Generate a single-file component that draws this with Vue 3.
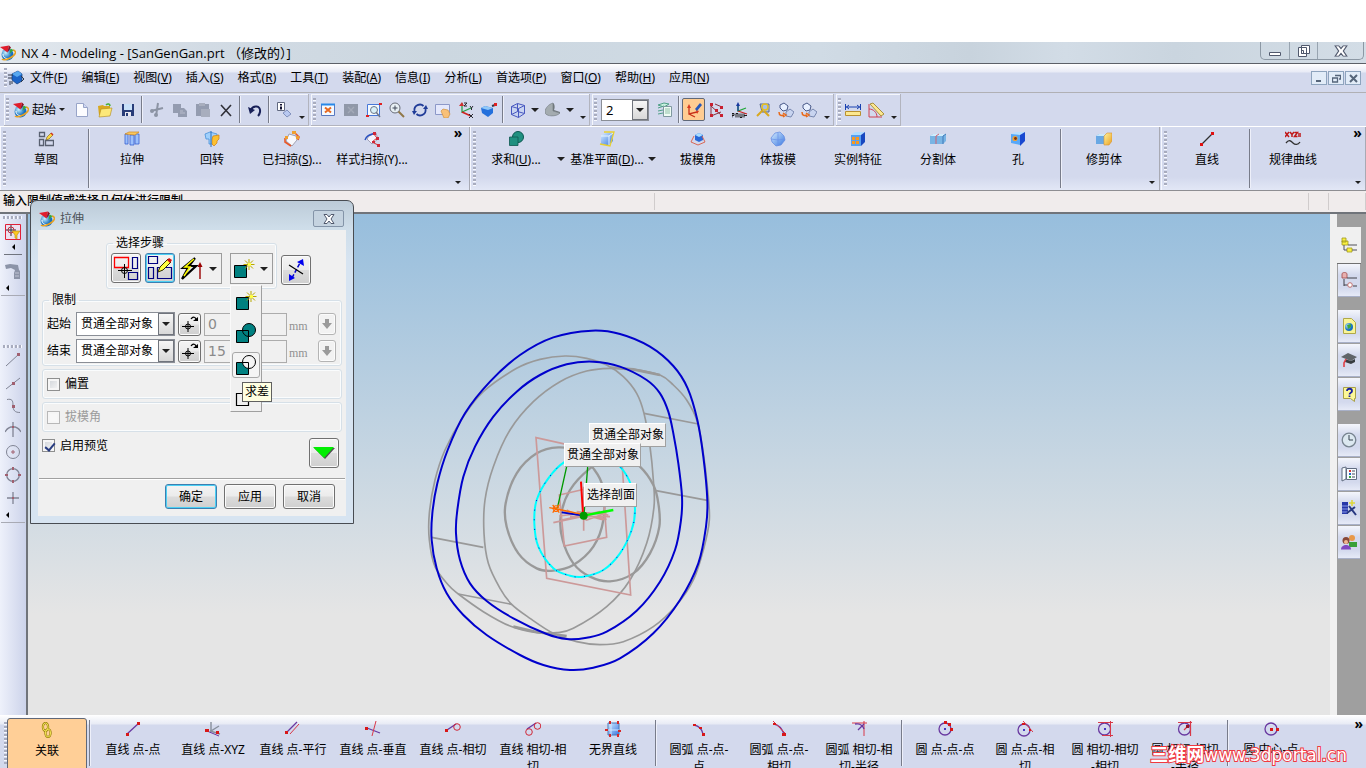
<template>
  <div class="app">
    <svg class="sprite" aria-hidden="true">
      <defs>
        <linearGradient id="gBlue" x1="0" y1="0" x2="1" y2="1">
          <stop offset="0" stop-color="#d4ecff" />
          <stop offset="1" stop-color="#3a78e0" />
        </linearGradient>
        <linearGradient id="gGold" x1="0" y1="0" x2="1" y2="1">
          <stop offset="0" stop-color="#fff3a0" />
          <stop offset="1" stop-color="#e8a020" />
        </linearGradient>
        <radialGradient id="gBall" cx="0.35" cy="0.35">
          <stop offset="0" stop-color="#c8f0ff" />
          <stop offset="1" stop-color="#1670c0" />
        </radialGradient>
      </defs>
      <symbol id="nx" viewBox="0 0 16 16">
        <circle cx="7.500" cy="9.500" r="6" fill="url(#gBall)" />
        <path d="M3 9c0 4 3 5 6 4.500" fill="none" stroke="#fff" />
        <path d="M13 5c4 1 3 5-3 8-4 2-7 2-8 1" fill="none" stroke="#e8a020" stroke-width="1.500" />
        <path d="M0 2l9-1.500-1.500 7z" fill="#e01c2c" />
        <path d="M9 .5l2 2-3.500 5z" fill="#8c1020" />
        <path d="M10.500 3.500l3 1.500-4 4z" fill="#38a838" />
      </symbol>
      <symbol id="part" viewBox="0 0 16 16">
        <path d="M4 4l6-3 4 3v7l-5 3-5-4z" fill="#1c64c8" stroke="#123c78" stroke-width=".7" />
        <path d="M4 4l5 3 5-3-4-3z" fill="#58a8f0" />
        <path d="M0 5h5M0 8h4M2 11v4M4 11v3M13 6l3 3-3 3" stroke="#303848" fill="none" />
      </symbol>
      <symbol id="new" viewBox="0 0 16 16">
        <path d="M2.500 1.500h7l4 4v9h-11z" fill="#fcfcff" stroke="#98a4c8" />
        <path d="M9.500 1.500v4h4" fill="#d0d8f4" stroke="#98a4c8" />
      </symbol>
      <symbol id="open" viewBox="0 0 16 16">
        <path d="M1 4l5-1 1 1h6v9H2z" fill="#d8a820" />
        <path d="M4 7l11-1-2 8-11 1z" fill="#fce878" stroke="#b08818" stroke-width=".6" />
        <path d="M9 3c2-2 4-1 4 1" stroke="#48b030" fill="none" stroke-width="1.500" />
      </symbol>
      <symbol id="save" viewBox="0 0 16 16">
        <path d="M2 2h12v12H2z" fill="#283c78" />
        <path d="M4 2h8v6H4z" fill="#c8e0f8" />
        <path d="M5 10h6v4H5z" fill="#e8e8f0" />
        <path d="M6 11h2v3H6z" fill="#283c78" />
      </symbol>
      <symbol id="cut" viewBox="0 0 16 16">
        <path d="M9 1L7 14M2 9l12-3" stroke="#8c94a4" stroke-width="2" fill="none" />
        <circle cx="7" cy="13" r="2" fill="#8c94a4" /><circle cx="3" cy="9" r="2" fill="#8c94a4" />
      </symbol>
      <symbol id="copy" viewBox="0 0 16 16">
        <path d="M1 2h8v9H1zM6 6h6l3 3v6H6z" fill="#949cb0" />
        <path d="M8 9h3M8 11h5" stroke="#b8bccc" />
      </symbol>
      <symbol id="paste" viewBox="0 0 16 16">
        <path d="M1 2h13v12H1z" fill="#949cb0" />
        <path d="M4 1h6v3H4zM6 7h9v8H6z" fill="#a8aebe" />
      </symbol>
      <symbol id="del" viewBox="0 0 16 16">
        <path d="M3 3l10 11M13 3L3 14" stroke="#303038" stroke-width="1.600" />
      </symbol>
      <symbol id="undo" viewBox="0 0 16 16">
        <path d="M4 8c2-5 10-5 9 2-.3 2-1 3-2 4" stroke="#182058" stroke-width="2" fill="none" />
        <path d="M1 5l2 7 5-4z" fill="#182058" />
      </symbol>
      <symbol id="info" viewBox="0 0 16 16">
        <path d="M1.500.5h7v8h-7z" fill="#fff" stroke="#606880" />
        <path d="M5 2v1.500M5 4.500v3" stroke="#101030" stroke-width="2" />
        <path d="M7 11l4-3 4 4-4 3z" fill="#b8c8f0" stroke="#7080b0" stroke-width=".8" />
      </symbol>
      <symbol id="fit" viewBox="0 0 16 16">
        <path d="M1.500 2.500h13v11h-13z" fill="#f4faff" stroke="#5878c0" />
        <path d="M1 2.500h14" stroke="#2888e8" stroke-width="2" />
        <path d="M5 5.500l6 5M11 5.500l-6 5" stroke="#e86820" stroke-width="2" />
      </symbol>
      <symbol id="fitgray" viewBox="0 0 16 16">
        <path d="M1 2h14v12H1z" fill="#9098a8" />
        <path d="M5 5l6 6M11 5l-6 6" stroke="#a4aab8" stroke-width="1.400" />
      </symbol>
      <symbol id="zoomwin" viewBox="0 0 16 16">
        <path d="M1.500 2.500h12v11h-12z" fill="#f4faff" stroke="#4878d8" />
        <circle cx="8" cy="8" r="3.500" fill="#d8f0f8" stroke="#707888" />
        <path d="M10 10l4 5" stroke="#707888" stroke-width="1.500" />
        <path d="M0 13h3v2H0zM13 1h3v2h-3z" fill="#e02020" />
      </symbol>
      <symbol id="zoom" viewBox="0 0 16 16">
        <circle cx="6" cy="6" r="5" fill="#e8f0f4" stroke="#686c78" />
        <path d="M3.500 6h5M6 3.500v5" stroke="#404858" />
        <path d="M9.500 9.500l5.500 5.500" stroke="#907848" stroke-width="2" />
      </symbol>
      <symbol id="rotate" viewBox="0 0 16 16">
        <path d="M2.500 9c-1-6 6-8 9-5M13.500 7c1 6-6 8-9 5" stroke="#203c98" stroke-width="1.800" fill="none" />
        <path d="M11 7h5l-2-4zM0 9l5 0-3 4z" fill="#203c98" />
      </symbol>
      <symbol id="pan" viewBox="0 0 16 16">
        <path d="M.5 2.500h14v10H.5z" fill="#e4e8fc" stroke="#8c98c8" />
        <path d="M6 9l2-2 5 1 2 4-2 4H9z" fill="#f8c078" stroke="#c88830" stroke-width=".6" />
      </symbol>
      <symbol id="csys" viewBox="0 0 16 16">
        <path d="M4 1v9l9-4" stroke="#28a048" stroke-width="1.300" fill="none" />
        <path d="M4 10l9 4" stroke="#d02020" stroke-width="1.500" />
        <path d="M1 4l3-4 2 4z" fill="#d03030" />
        <path d="M6 1h3L6 4h3M12 4l1.500 2L15 4M13.500 6v2M11 12l4 4M15 12l-4 4" stroke="#282830" fill="none" />
      </symbol>
      <symbol id="shaded" viewBox="0 0 16 16">
        <path d="M0 6l4-2 8 2v5l-5 4-6-4z" fill="#2470dc" />
        <path d="M0 6l4-2 8 2-5 2z" fill="#90c8f8" />
        <path d="M11 4l3-1" stroke="#303848" stroke-width="2" /><path d="M13 1h3v3h-3z" fill="#e02020" />
      </symbol>
      <symbol id="wire" viewBox="0 0 16 16">
        <path d="M1.500 4.500l6-3 7 2v8l-6 4-7-3zM1.500 4.500l7 2 6-3M8.500 6.500v9M7.500 1.500v8l-6 3M7.500 9.500l7 2" stroke="#4858c0" fill="#b8ccf8" fill-opacity=".4" />
      </symbol>
      <symbol id="section" viewBox="0 0 16 16">
        <path d="M8 1v8l7 2c-3 4-15 4-15-1 0-4 4-8 8-9z" fill="#a4acb0" stroke="#707880" stroke-width=".6" />
        <path d="M8 1c2 1 2 5 1 7l6 2v1l-7-2z" fill="#70787c" />
      </symbol>
      <symbol id="layers" viewBox="0 0 16 16">
        <path d="M1 3l6-2 5 1-5 3zM1 6l6-2M1 9l5-1M1 12l5-1" stroke="#50a088" fill="#c8f0e0" />
        <path d="M6.500 4.500h8v10h-8z" fill="#eefcf4" stroke="#8098a0" />
        <path d="M8 7h5M8 9h5M8 11h5" stroke="#90c0a8" />
      </symbol>
      <symbol id="wcs" viewBox="0 0 16 16">
        <path d="M3 4v8l8-2M3 12l6 3" stroke="#c83018" stroke-width="1.300" fill="none" />
        <path d="M1 6l2-4 2 4zM10 8l3 1-2 3z" fill="#d83820" />
        <path d="M9 7l5-6 2 2-5 6z" fill="#2858b8" />
      </symbol>
      <symbol id="wcs2" viewBox="0 0 16 16">
        <path d="M2 2v12l10-4M2 4l10 9M6 2l7 3" stroke="#883040" fill="none" />
        <path d="M1 1h3v3H1zM1 12h3v3H1zM11 4h3v3h-3zM11 12h3v3h-3zM6 7h3v3H6z" fill="#c82030" />
      </symbol>
      <symbol id="wcssave" viewBox="0 0 16 16">
        <path d="M6 2v7l8-3" stroke="#20a838" stroke-width="1.300" fill="none" />
        <path d="M6 9l9 3" stroke="#d02020" stroke-width="1.300" />
        <path d="M6 9V2" stroke="#1838a0" stroke-width="1.300" /><path d="M4 4l2-4 2 4z" fill="#1838a0" />
        <path d="M0 15.500v-4h2v2H0M4 15.500v-4h2v4M8 11.500v4h2v-4M12 11.500v4M12 13.500h3" stroke="#181818" fill="none" />
      </symbol>
      <symbol id="key" viewBox="0 0 16 16">
        <path d="M5 2h9v8H7z" fill="#a8c0e8" stroke="#586890" />
        <circle cx="10" cy="5" r="3" fill="none" stroke="#e8c020" stroke-width="1.500" />
        <path d="M8 8l-6 6M9 9l5 5" stroke="#d8a820" stroke-width="2" />
      </symbol>
      <symbol id="blocks" viewBox="0 0 16 16">
        <path d="M2 3l4-2 4 3-1 4-4 1-3-3z" fill="#e8f0ff" stroke="#485888" />
        <path d="M8 10l4-3 4 3-3 5-5-1z" fill="#c8d4f0" stroke="#7888b0" />
        <path d="M1 10c0 4 3 4 5 3M5 11l3 2-3 2" stroke="#e86818" stroke-width="1.500" fill="none" />
      </symbol>
      <symbol id="measure" viewBox="0 0 16 16">
        <path d="M.5 2v6M15.500 2v6M1 5h14M4 3L1.500 5 4 7M12 3l2.500 2L12 7" stroke="#1840b0" fill="none" />
        <path d="M.5 9.500h15v4H.5z" fill="#fce890" stroke="#b89030" />
      </symbol>
      <symbol id="angle" viewBox="0 0 16 16">
        <path d="M1 2v13h13M1 7c4 0 8 3 8 8" stroke="#d04050" fill="none" />
        <path d="M2 2l3-1 11 11-3 2z" fill="#fce890" stroke="#a89040" />
      </symbol>
      <symbol id="sketch" viewBox="0 0 16 16">
        <path d="M1.500 1.500h5v4h-5zM1.500 8.500h4v6h-4zM7.500 9.500h8v5h-8z" fill="none" stroke="#586070" stroke-width="1.300" />
        <path d="M8 9l1-3 4-4 2 2-4 4z" fill="#fcd840" stroke="#705820" stroke-width=".6" />
        <path d="M13 2l2 2" stroke="#d03020" stroke-width="1.500" />
      </symbol>
      <symbol id="extrude" viewBox="0 0 16 16">
        <path d="M1 3h3v10H1zM6 4h4v10H6zM11 3h4v10h-4z" fill="#9cc0fc" stroke="#3860d0" stroke-width=".8" />
        <path d="M1 3l4-2h10l-4 3z" fill="#f8c860" stroke="#d08820" stroke-width=".7" />
      </symbol>
      <symbol id="revolve" viewBox="0 0 16 16">
        <path d="M1 3l5-2 7 2v4H9v6H5V8H2z" fill="#a0d0fc" stroke="#4890d8" stroke-width=".8" />
        <path d="M9 5l6-1v4l-2 2v2l-3 3-2-2V8z" fill="#fcc030" stroke="#d08010" stroke-width=".7" />
        <path d="M7 0v16" stroke="#2870c0" />
      </symbol>
      <symbol id="swept" viewBox="0 0 16 16">
        <path d="M5 3l7 2 1 4-5 6-6-5z" fill="#f8f8fc" stroke="#a0a0b0" />
        <path d="M10 1l5 5-1 3M1 7v4l6 4" stroke="#e85828" stroke-width="1.600" fill="none" />
        <path d="M8 0h4v3H8zM1 5h3v3H1zM12 5h3v3h-3z" fill="#f0a030" />
      </symbol>
      <symbol id="styled" viewBox="0 0 16 16">
        <path d="M5 5l7-3 2 6-6 5-5-5z" fill="#f4f4fc" stroke="#a0a0b8" />
        <path d="M1 9c2-5 5-5 10-7" stroke="#2850c0" fill="none" stroke-width="1.400" />
        <path d="M9 2l4 5-5 4 6 3" stroke="#d03030" fill="none" />
        <path d="M9 1h3v3H9zM13 13h3v3h-3zM8 10h3v2H8zM12 6h3v3h-3z" fill="#d02838" />
      </symbol>
      <symbol id="unite" viewBox="0 0 16 16">
        <circle cx="10" cy="6" r="5.500" fill="#209080" stroke="#0c5850" />
        <path d="M1.500 6h8.500v8.500H1.500z" fill="#209080" stroke="#0c5850" stroke-width=".8" />
      </symbol>
      <symbol id="datum" viewBox="0 0 16 16">
        <path d="M2 5l4-3h8v8l-4 4H2z" fill="url(#gBlue)" />
        <path d="M2 5h8v9M10 5l4-3" stroke="#e8f4ff" fill="none" />
        <path d="M5 1h10l-4 14-10-2" fill="none" stroke="#e8d030" stroke-width="1.300" />
      </symbol>
      <symbol id="draft" viewBox="0 0 16 16">
        <path d="M5 4l4-2 4 2v5l-4 2-4-2z" fill="#2868d8" />
        <path d="M5 4l4 2 4-2-4-2z" fill="#a8dcff" />
        <path d="M4 5L1 11l7 3 7-3-3-6" stroke="#d86858" fill="none" />
      </symbol>
      <symbol id="bodydraft" viewBox="0 0 16 16">
        <path d="M5 2l5-1 4 4 1 4-4 5-5 1-4-4-1-4z" fill="url(#gBlue)" stroke="#6088e0" stroke-width=".7" />
        <path d="M1 8l7 1 7-1M8 2v13" stroke="#6890e8" stroke-width=".7" fill="none" />
      </symbol>
      <symbol id="instance" viewBox="0 0 16 16">
        <path d="M1 4h10v11H1z" fill="#58a0f0" /><path d="M1 4l4-3h10l-4 3z" fill="#b0dcff" />
        <path d="M11 4l4-3v10l-4 4z" fill="#1848c0" />
        <path d="M2 6h3v3H2zM6 6h3v3H6zM2 10h3v3H2zM6 10h3v3H6z" fill="#f89820" />
      </symbol>
      <symbol id="split" viewBox="0 0 16 16">
        <path d="M0 5l3-2h13v7l-3 3H0z" fill="#78b4e4" /><path d="M0 5l3-2h13l-3 2z" fill="#d0ecfc" />
        <path d="M13 5v8M13 5l3-2" stroke="#4078b8" /><path d="M6 13V5l3-2" stroke="#d06070" fill="none" />
      </symbol>
      <symbol id="hole" viewBox="0 0 16 16">
        <path d="M1 3h9v11l-9-2z" fill="#58a8f8" /><path d="M1 3l5-2h9l-5 3z" fill="#b8e0ff" />
        <path d="M10 4l5-3v9l-5 5z" fill="#1848d0" /><circle cx="5" cy="7.500" r="2.600" fill="#f0a030" /><circle cx="5.500" cy="7.500" r="1.400" fill="#783010" />
      </symbol>
      <symbol id="trim" viewBox="0 0 16 16">
        <path d="M0 5l3-2h7v10H0z" fill="#68a8e4" /><path d="M0 5l3-2h7L8 5z" fill="#c8e8fc" />
        <path d="M8 5l3-3h5v8l-3 4H8z" fill="url(#gGold)" stroke="#d89030" stroke-width=".6" />
      </symbol>
      <symbol id="line" viewBox="0 0 16 16">
        <path d="M3 13L14 2" stroke="#303030" stroke-width="1.300" />
        <path d="M1 12h3v3H1zM12 1h3v3h-3z" fill="#e01010" />
      </symbol>
      <symbol id="law" viewBox="0 0 16 16">
        <path d="M0 1l4 5M4 1L0 6M5 1l2 2.500L9 1M7 3v3M9.500 1.500h3L9.500 5.500h3M13 3h3M13 5h3" stroke="#c01818" stroke-width="1.500" fill="none" />
        <path d="M1 12c3-4 5-2 7 0s5 2 7-1" stroke="#303030" stroke-width="1.300" fill="none" />
      </symbol>
      <symbol id="linePP" viewBox="0 0 16 16">
        <path d="M2 13L14 2" stroke="#6838a0" stroke-width="1.300" /><path d="M1 12h3v3H1zM12 1h3v3h-3z" fill="#d81818" />
      </symbol>
      <symbol id="lineXYZ" viewBox="0 0 16 16">
        <path d="M6 1v9l8-5M5 10l10 3" stroke="#88909c" stroke-width="1.400" fill="none" />
        <path d="M2 10l12 5" stroke="#6838a0" /><path d="M0 8h4v3H0zM11 10h3v3h-3z" fill="#d81818" />
      </symbol>
      <symbol id="linePar" viewBox="0 0 16 16">
        <path d="M2 11L12 1" stroke="#6838a0" stroke-width="1.300" /><path d="M5 13l9-10" stroke="#d83848" /><path d="M0 10h3v3H0z" fill="#d81818" />
      </symbol>
      <symbol id="linePerp" viewBox="0 0 16 16">
        <path d="M2 7l13 5" stroke="#6838a0" stroke-width="1.300" /><path d="M11 0L7 15" stroke="#d83848" /><path d="M0 6h3v3H0z" fill="#d81818" />
      </symbol>
      <symbol id="lineTan" viewBox="0 0 16 16">
        <path d="M2 9l9-6" stroke="#6838a0" stroke-width="1.300" /><circle cx="12" cy="6" r="3.300" fill="none" stroke="#d02838" /><path d="M0 8h3v3H0z" fill="#d81818" />
      </symbol>
      <symbol id="lineTT" viewBox="0 0 16 16">
        <path d="M2 8l9-6" stroke="#6838a0" stroke-width="1.300" /><circle cx="4" cy="11" r="3.300" fill="none" stroke="#d02838" /><circle cx="12.500" cy="5" r="3.300" fill="none" stroke="#d02838" />
      </symbol>
      <symbol id="unbounded" viewBox="0 0 16 16">
        <path d="M3 2h11v12H3z" fill="url(#gBlue)" stroke="#4878b8" /><path d="M6 2v12M3 9h11" stroke="#d0e8ff" />
        <path d="M4 0h2v3H4zM12 0h2v3h-2zM0 8h3v2H0zM13 9h3v2h-3zM4 13h2v3H4zM12 13h2v3h-2z" fill="#d82828" />
      </symbol>
      <symbol id="arc3" viewBox="0 0 16 16">
        <path d="M3 4c5 1 8 4 9 9" stroke="#6838a0" stroke-width="1.300" fill="none" /><path d="M2 3h3v2H2zM8 6h3v2H8zM11 12h3v3h-3z" fill="#d81818" />
      </symbol>
      <symbol id="arcTan" viewBox="0 0 16 16">
        <path d="M3 3c5 1 8 5 10 10" stroke="#6838a0" stroke-width="1.300" fill="none" /><path d="M2 0l13 13" stroke="#d83848" /><path d="M2 2h3v2H2zM11 12h4v3h-4z" fill="#d81818" />
      </symbol>
      <symbol id="arcTT" viewBox="0 0 16 16">
        <path d="M1 2h15M13 0v15" stroke="#d83848" /><path d="M4 3c5-1 8 2 9 5M7 9l6-6" stroke="#6838a0" stroke-width="1.300" fill="none" />
      </symbol>
      <symbol id="circ3" viewBox="0 0 16 16">
        <circle cx="8" cy="8" r="6" fill="none" stroke="#6838a0" stroke-width="1.300" /><path d="M7 7h2v2H7z" fill="#4838c0" /><path d="M7 0h3v3H7zM11 2h3v3h-3zM13 7h3v3h-3z" fill="#d81818" />
      </symbol>
      <symbol id="circPPT" viewBox="0 0 16 16">
        <circle cx="7" cy="9" r="6" fill="none" stroke="#6838a0" stroke-width="1.300" /><path d="M6 0l10 11" stroke="#d83848" /><path d="M6 8h2v2H6z" fill="#4838c0" /><path d="M5 2h3v2H5zM12 8h2v2h-2z" fill="#d81818" />
      </symbol>
      <symbol id="circTTT" viewBox="0 0 16 16">
        <circle cx="7.500" cy="8" r="6" fill="none" stroke="#6838a0" stroke-width="1.300" /><path d="M1 1.500h15M13.500 0v16M5 14.500h11" stroke="#d83848" /><path d="M7 7h2v2H7z" fill="#4838c0" />
      </symbol>
      <symbol id="circTTR" viewBox="0 0 16 16">
        <circle cx="7.500" cy="8" r="6" fill="none" stroke="#6838a0" stroke-width="1.300" /><path d="M1 1.500h14M13.500 0v15M7 9l5-5" stroke="#d83848" stroke-width="1.200" /><path d="M9 4h3v3H9z" fill="#981828" />
      </symbol>
      <symbol id="circCP" viewBox="0 0 16 16">
        <circle cx="8" cy="8" r="6" fill="none" stroke="#6838a0" stroke-width="1.300" /><path d="M7 7h3v3H7zM13 7h3v3h-3z" fill="#d81818" />
      </symbol>
      <symbol id="chain" viewBox="0 0 16 16">
        <ellipse cx="6.500" cy="5" rx="2.600" ry="4" fill="none" stroke="#988010" stroke-width="2.200" /><ellipse cx="9" cy="11" rx="2.600" ry="4" fill="none" stroke="#988010" stroke-width="2.200" />
        <ellipse cx="6.500" cy="5" rx="2.600" ry="4" fill="none" stroke="#f0e050" /><ellipse cx="9" cy="11" rx="2.600" ry="4" fill="none" stroke="#f0e050" />
      </symbol>
      <symbol id="filter" viewBox="0 0 16 16">
        <path d="M.5.5h15v15H.5z" fill="#ece0f0" stroke="#e02038" /><path d="M6 1v11M1 6h10" stroke="#303040" /><circle cx="6" cy="6" r="3" fill="none" stroke="#c03040" />
        <path d="M7 7h8l-3 4v4l-2-1v-3z" fill="#fcc820" stroke="#b08818" stroke-width=".6" />
      </symbol>
      <symbol id="spray" viewBox="0 0 16 16">
        <path d="M0 2l5-1 8 1 1 5 1 1v8H9v-6l1-3-4-2-5 1z" fill="#8c94a8" /><path d="M10 10h4M10 13h4" stroke="#c0c4d4" />
      </symbol>
      <symbol id="snapEnd" viewBox="0 0 16 16"><path d="M1 14L14 2" stroke="#808494" /><path d="M12 1h3v3h-3z" fill="#a06070" /></symbol>
      <symbol id="snapMid" viewBox="0 0 16 16"><path d="M1 14L15 3" stroke="#808494" /><path d="M7 7h3v3H7z" fill="#a06070" /></symbol>
      <symbol id="snapCurve" viewBox="0 0 16 16"><path d="M2 1.500c5-1 6 1 6 6s2 7 7 7" stroke="#808494" fill="none" /><path d="M7 7h3v3H7z" fill="#a06070" /></symbol>
      <symbol id="snapInt" viewBox="0 0 16 16"><path d="M0 11c4-7 12-7 16 0M8 1v15" stroke="#808494" fill="none" stroke-width="1.300" /><path d="M7 5h2v2H7z" fill="#a06070" /></symbol>
      <symbol id="snapCen" viewBox="0 0 16 16"><circle cx="8" cy="8" r="6.500" fill="none" stroke="#808494" /><path d="M8 6v4M6 8h4" stroke="#a06070" /></symbol>
      <symbol id="snapQuad" viewBox="0 0 16 16"><circle cx="8" cy="8" r="6.300" fill="none" stroke="#808494" stroke-width="1.300" /><path d="M7 0h2v3H7zM7 13h2v3H7zM0 7h3v2H0zM13 7h3v2h-3z" fill="#a06070" /></symbol>
      <symbol id="snapPt" viewBox="0 0 16 16"><path d="M8 2v12M2 8h12" stroke="#808494" stroke-width="1.300" /><path d="M7 7h2v2H7z" fill="#a06070" /></symbol>
      <symbol id="assy" viewBox="0 0 16 16">
        <path d="M1 1h4v4H1zM1 4h6v4H1zM6 11h5v4H6z" fill="#f8f040" stroke="#a09820" stroke-width=".8" /><path d="M3 8v5M3 13h3M7 8h9M11 13h5" stroke="#505058" fill="none" />
      </symbol>
      <symbol id="nav" viewBox="0 0 16 16">
        <path d="M1 2c0-2 5-2 5 0v4H1z" fill="#e8b0b0" stroke="#a04848" stroke-width=".8" /><path d="M3 7v7M3 13h4M6 6h10M12 14h4" stroke="#404048" fill="none" /><circle cx="9" cy="13" r="2.300" fill="#fff" stroke="#c07070" />
      </symbol>
      <symbol id="web" viewBox="0 0 16 16">
        <path d="M2.500.5h8l4 4v11h-12z" fill="#f8f498" stroke="#b0a848" /><circle cx="8" cy="9" r="4" fill="url(#gBall)" /><path d="M6 7l4-1v3l-3 2z" fill="#40a838" />
      </symbol>
      <symbol id="cap" viewBox="0 0 16 16">
        <path d="M0 5l7-4 9 4-6 4z" fill="#606468" /><path d="M4 7l6 2 4-2v3l-4 2-6-2z" fill="#383c40" /><path d="M5 7l-2 4v4" stroke="#e04048" stroke-width="1.600" fill="none" />
      </symbol>
      <symbol id="help" viewBox="0 0 16 16">
        <path d="M2.500 1.500h12v11h-1v3l-4-3h-7z" fill="#fcf898" stroke="#a8a048" /><path d="M6 5c0-3 5-3 5 0 0 2-2.500 1.500-2.500 3.500M8.500 9.500v1.500" stroke="#1820a0" stroke-width="1.800" fill="none" />
      </symbol>
      <symbol id="clock" viewBox="0 0 16 16">
        <circle cx="8" cy="8" r="6.800" fill="#dce8f0" stroke="#788490" stroke-width="1.300" /><path d="M8 3v5h4" stroke="#384450" fill="none" />
      </symbol>
      <symbol id="role" viewBox="0 0 16 16">
        <path d="M1 2l4-1v12l-4 2zM5.500 2.500h10v11h-10z" fill="#f8fcff" stroke="#606c80" /><path d="M8 4h2v2H8z" fill="#d83030" /><path d="M8 7h2v2H8z" fill="#2868c8" /><path d="M8 10h2v2H8z" fill="#38a838" /><path d="M11 5h3M11 8h3M11 11h3" stroke="#404858" />
      </symbol>
      <symbol id="vis" viewBox="0 0 16 16">
        <path d="M1 2h6v12H1z" fill="#2838a8" /><path d="M1 6h6M1 9h6M1 12h6" stroke="#8898e8" /><path d="M8 6l7 9M14 7l-8 6" stroke="#283880" stroke-width="2" /><path d="M11 0v6M8 3h6" stroke="#e0d838" stroke-width="1.500" />
      </symbol>
      <symbol id="users" viewBox="0 0 16 16">
        <circle cx="11" cy="4" r="3" fill="#e89848" /><path d="M8 8h8v5H8z" fill="#38a038" /><circle cx="5" cy="6.500" r="3.500" fill="#884838" /><circle cx="5" cy="8" r="2" fill="#f0b890" /><path d="M0 15.500c0-6 10-6 10 0z" fill="#8048c0" />
      </symbol>
      <symbol id="stepSection" viewBox="0 0 26 26">
        <path d="M1.500 2.500h14v10h-14z" fill="none" stroke="#f00" stroke-width="1.300" /><path d="M19.500 2.500h5v11h-5zM15.500 17.500h9v7h-9z" fill="none" stroke="#000080" stroke-width="1.200" /><path d="M11.500 9v14M5 15.500h14" stroke="#000" /><circle cx="11.500" cy="15.500" r="3" fill="none" stroke="#000" />
      </symbol>
      <symbol id="stepSketch" viewBox="0 0 26 26">
        <path d="M1.500 1.500h9v7h-9zM1.500 12.500h5v11h-5zM10.500 12.500h14v11h-14z" fill="none" stroke="#000080" stroke-width="1.200" /><path d="M11 17l2-5 8-8 3 3-8 8z" fill="#ffff40" stroke="#303000" /><path d="M20 5l2-2 3 2-2 3z" fill="#d01010" />
      </symbol>
      <symbol id="stepDir" viewBox="0 0 26 26">
        <path d="M15 2L3 12h5l-6 11M15 2l-6 8h7L2 23" fill="none" stroke="#000" stroke-width="2.200" /><path d="M14 3L5 11h5L4 20" fill="none" stroke="#ff0" stroke-width="1.500" /><path d="M20 8v15" stroke="#900" stroke-width="1.400" /><path d="M17.500 11l2.500-5 2.500 5z" fill="#900" />
      </symbol>
      <symbol id="boolNew" viewBox="0 0 22 20">
        <path d="M1.500 6.500h12v12h-12z" fill="#008080" stroke="#000" /><path d="M16 0v11M10.500 5.500h11M12 1.500l8 8M20 1.500l-8 8" stroke="#b8a800" /><path d="M15 4h3v3h-3z" fill="#ff4" />
      </symbol>
      <symbol id="boolAdd" viewBox="0 0 22 20">
        <path d="M1.500 7.500h12v12h-12z" fill="#008080" stroke="#000" /><circle cx="14" cy="7" r="6.500" fill="#008080" stroke="#000" /><path d="M7.500 7.500h6v6" fill="none" stroke="#000" />
      </symbol>
      <symbol id="boolSub" viewBox="0 0 22 20">
        <path d="M1.500 7.500h12v12h-12z" fill="#008080" stroke="#000" /><circle cx="14" cy="7" r="6.500" fill="#f4f4f4" stroke="#000" /><path d="M7.500 7.500h6v6" fill="none" stroke="#000" />
      </symbol>
      <symbol id="boolInt" viewBox="0 0 22 20">
        <path d="M1.500 6.500h12v12h-12z" fill="none" stroke="#000" stroke-width="1.200" />
      </symbol>
      <symbol id="flip" viewBox="0 0 26 26">
        <path d="M9 21l9-17" stroke="#00c" stroke-width="1.500" stroke-dasharray="4 2" /><path d="M14 5l6-3 1 7zM6 17l0 7 6-3z" fill="#00e" /><path d="M6 8l14 9" stroke="#000" stroke-width="1.200" />
      </symbol>
      <symbol id="pointIn" viewBox="0 0 16 16">
        <path d="M6 5v11M0 10.500h12" stroke="#000" /><circle cx="6" cy="10.500" r="2.500" fill="none" stroke="#000" /><path d="M9 3c2-3 5-2 5 1" stroke="#000" fill="none" stroke-width="1.200" /><path d="M11 5h5V1z" />
      </symbol>
      <symbol id="down" viewBox="0 0 12 12"><path d="M4 1h4v4h3l-5 6-5-6h3z" fill="#9a9a9a" /></symbol>
      <symbol id="closeX" viewBox="0 0 12 10">
        <path d="M1 .5h3l2 2.500 2-2.500h3L8 5l3 4.500H8L6 7 4 9.500H1L4 5z" fill="#fff" stroke="#50586c" />
      </symbol>
    </svg>

    <header class="titlebar">
      <svg class="icon"><use href="#nx" /></svg>
      <h1 class="title">NX 4 - Modeling - [SanGenGan.prt （修改的）]</h1>
      <div class="win-buttons">
        <button class="win-btn" aria-label="Minimize"><svg viewBox="0 0 14 12"><path d="M1.500 7.500h11v3h-11z" fill="#fff" stroke="#50586c" /></svg></button>
        <button class="win-btn" aria-label="Restore"><svg viewBox="0 0 14 12"><path d="M4.500.5h8v8h-8zM1.500 2.500h8v9h-8zM4.500 5.500h2v3h-2z" fill="#fff" stroke="#50586c" /></svg></button>
        <button class="win-btn wide" aria-label="Close"><svg viewBox="0 0 12 10"><use href="#closeX" /></svg></button>
      </div>
    </header>

    <nav class="menubar">
      <i class="grip"></i>
      <svg class="icon"><use href="#part" /></svg>
      <div class="menus">
        <button v-for="m in menus" :key="m.key" class="menu">{{ m.text }}(<u>{{ m.key }}</u>)</button>
      </div>
      <div class="mdi">
        <button aria-label="Minimize window"><svg viewBox="0 0 9 9"><path d="M1 7h5" stroke="#56657a" stroke-width="2" /></svg></button>
        <button aria-label="Restore window"><svg viewBox="0 0 9 9"><path d="M3 1.500h5.500V5H7M.5 4h5v4h-5z" fill="none" stroke="#56657a" stroke-width="1.300" /></svg></button>
        <button aria-label="Close window"><svg viewBox="0 0 9 9"><path d="M1 1l7 7M8 1L1 8" stroke="#56657a" stroke-width="2" /></svg></button>
      </div>
    </nav>

    <div class="toolrow">
      <div v-for="(bar, b) in bars" :key="b" class="bar">
        <i class="grip"></i>
        <template v-for="(t, i) in bar" :key="i">
          <button v-if="t === 'start'" class="start"><svg class="icon"><use href="#nx" /></svg>起始<i class="tri small"></i></button>
          <span v-else-if="t === '|'" class="sep"></span>
          <button v-else-if="t === 'v'" class="drop" aria-label="More"><i class="tri"></i></button>
          <span v-else-if="t === 'layer'" class="combo layer">
            <select v-model="layer" aria-label="Layer"><option>1</option><option>2</option></select>
            <i class="combo-arrow"><i class="tri"></i></i>
          </span>
          <button v-else class="tool" :class="{ active: t === 'wcs' }" :aria-label="t"><svg class="icon"><use :href="'#' + t" /></svg></button>
        </template>
        <button class="mini" aria-label="Toolbar options"><i class="tri small"></i></button>
      </div>
    </div>

    <div class="featurerow">
      <div v-for="(bar, b) in features" :key="b" class="fbar" :class="{ grow: bar.grow }">
        <i class="grip"></i>
        <template v-for="(f, i) in bar.items" :key="i">
          <span v-if="f === '|'" class="sep"></span>
          <template v-else>
            <button class="feature">
              <svg class="icon"><use :href="'#' + f.icon" /></svg>
              <span>{{ f.text }}<template v-if="f.key">(<u v-if="f.line">{{ f.key }}</u><template v-else>{{ f.key }}</template>)...</template></span>
            </button>
            <button v-if="f.drop" class="fdrop" aria-label="More"><i class="tri"></i></button>
          </template>
        </template>
        <div class="fend">
          <b v-if="bar.more" class="chev">»</b>
          <i class="tri small"></i>
        </div>
      </div>
    </div>

    <div class="status">
      <span class="cue">输入限制值或选择几何体进行限制</span>
      <span class="cell"></span>
      <span class="cell narrow"></span>
      <span class="cell last"></span>
    </div>

    <main class="workspace">
      <aside class="rail">
        <div class="railbar">
          <i class="hgrip"></i>
          <button class="railbtn first" aria-label="Filter"><svg class="icon"><use href="#filter" /></svg></button>
          <i class="left"></i>
          <hr />
          <button class="railbtn" aria-label="Color"><svg class="icon"><use href="#spray" /></svg></button>
          <i class="left side"></i>
        </div>
        <div class="railbar">
          <i class="hgrip"></i>
          <button v-for="s in snaps" :key="s" class="railbtn" :aria-label="s"><svg class="icon"><use :href="'#' + s" /></svg></button>
          <i class="left side"></i>
        </div>
      </aside>

      <section class="stage">
        <div class="model">
          <svg viewBox="0 0 900 1080">
            <g fill="none" stroke="#999" stroke-width="5">
              <path v-for="(p, i) in grayCurves" :key="i" :d="smooth(p)" />
              <path d="M672 280L835 312M708 512L862 541M35 652L190 682M115 822L275 853" />
              <path d="M570 143L640 148L720 165M280 920L350 936L440 948" stroke-width="8" />
            </g>
            <g fill="none" stroke="#999" stroke-width="7">
              <path v-for="(p, i) in holes" :key="i" :d="smooth(p)" />
            </g>
            <g fill="none" stroke="#c99" stroke-width="5">
              <path d="M348 353L380 775L632 825L605 410Z" />
              <path d="M418 525L548 495L560 652L433 678Z" />
              <path d="M491 500V632M400 608L570 572M430 575L560 598M425 600L540 575M450 590H570M440 570L500 600L560 578M418 588L480 580L550 600M470 575L565 585" />
            </g>
            <g fill="none" stroke="#00c" stroke-width="6">
              <path v-for="(p, i) in blueCurves" :key="i" :d="smooth(p)" />
            </g>
            <path :d="smooth(cyan)" fill="none" stroke="#0ff" stroke-width="6" />
            <path :d="smooth(cyan)" fill="none" stroke="#00c" stroke-width="3" stroke-dasharray="3 26" />
            <path d="M440 440L412 565M503 440L492 585M509 340V370" stroke="#090" stroke-width="4" />
            <path d="M490 587L425 577" stroke="#00c" stroke-width="5" />
            <path d="M425 570L488 583M388 563L440 573M398 555L418 578M418 554L398 578" stroke="#ff6a00" stroke-width="4" />
            <circle cx="408" cy="566" r="9" fill="none" stroke="#ff6a00" stroke-width="3" />
            <path d="M483 485L489 582" stroke="#f00" stroke-width="6" />
            <path d="M490 587L580 570" stroke="#0f0" stroke-width="7" />
            <circle cx="491" cy="587" r="12" fill="#090" />
          </svg>
          <span class="tag end">贯通全部对象</span>
          <span class="tag begin">贯通全部对象</span>
          <span class="tag profile">选择剖面</span>
        </div>
      </section>

      <aside class="resource">
        <button v-for="r in resources" :key="r.icon" class="rtab" :class="{ current: r.current, gap: r.gap }" :aria-label="r.icon">
          <svg class="icon"><use :href="'#' + r.icon" /></svg>
        </button>
      </aside>
    </main>

    <footer class="curvebar">
      <i class="grip"></i>
      <template v-for="(c, i) in curves" :key="i">
        <span v-if="c === '|'" class="sep"></span>
        <button v-else class="curve" :class="{ pressed: c.pressed }">
          <svg class="icon"><use :href="'#' + c.icon" /></svg>
          <span>{{ c.text }}</span>
        </button>
      </template>
      <b class="chev">»</b>
      <span class="watermark"><b>三维网</b>www.3dportal.cn</span>
    </footer>

    <form class="dialog" @submit.prevent>
      <div class="dialog-head">
        <svg class="icon"><use href="#nx" /></svg>
        <h2>拉伸</h2>
        <button type="button" class="dialog-close" aria-label="Close"><svg viewBox="0 0 12 10"><use href="#closeX" /></svg></button>
      </div>
      <div class="dialog-body">
        <div class="steps">
          <fieldset class="group steps-group">
            <legend>选择步骤</legend>
            <button type="button" class="btn big" aria-label="选择剖面"><svg><use href="#stepSection" /></svg></button>
            <button type="button" class="btn big focus" aria-label="草图剖面"><svg><use href="#stepSketch" /></svg></button>
            <button type="button" class="split" aria-label="方向"><svg><use href="#stepDir" /></svg><i class="tri"></i></button>
            <div class="bool">
              <button type="button" class="split" aria-label="布尔"><svg class="op"><use href="#boolNew" /></svg><i class="tri"></i></button>
              <div class="bool-menu">
                <button v-for="o in ops" :key="o.icon" type="button" :class="{ hot: o.hot }" :aria-label="o.text">
                  <svg class="op"><use :href="'#' + o.icon" /></svg>
                </button>
                <span class="tip">求差</span>
              </div>
            </div>
          </fieldset>
          <button type="button" class="btn big flip" aria-label="反向"><svg><use href="#flip" /></svg></button>
        </div>

        <fieldset class="group limits">
          <legend>限制</legend>
          <div v-for="l in limits" :key="l.id" class="limit">
            <label :for="l.id">{{ l.text }}</label>
            <span class="combo wide">
              <select :id="l.id"><option>贯通全部对象</option><option>值</option></select>
              <i class="combo-arrow"><i class="tri"></i></i>
            </span>
            <button type="button" class="btn point" aria-label="点"><svg class="icon"><use href="#pointIn" /></svg></button>
            <input :value="l.value" :aria-label="l.text + '值'" disabled />
            <span class="unit">mm</span>
            <button type="button" class="btn arrow" aria-label="选项" disabled><svg><use href="#down" /></svg></button>
          </div>
        </fieldset>

        <div class="group check"><input id="offset" type="checkbox" /><label for="offset">偏置</label></div>
        <div class="group check off"><input id="taper" type="checkbox" disabled /><label for="taper">拔模角</label></div>

        <div class="preview">
          <input id="preview" v-model="preview" type="checkbox" />
          <label for="preview">启用预览</label>
          <button type="button" class="btn big more" aria-label="更多">
            <svg viewBox="0 0 26 26"><path d="M3 8h21L14 19z" fill="#505050" /><path d="M2 7h21L13 18z" fill="#0e0" /></svg>
          </button>
        </div>
        <hr class="rule" />
        <div class="actions">
          <button type="submit" class="btn text focus">确定</button>
          <button type="button" class="btn text">应用</button>
          <button type="button" class="btn text">取消</button>
        </div>
      </div>
    </form>
  </div>
</template>

<script setup>
import { ref } from 'vue'

const layer = ref('2')
const preview = ref(true)

const menus = [
  { text: '文件', key: 'F' },
  { text: '编辑', key: 'E' },
  { text: '视图', key: 'V' },
  { text: '插入', key: 'S' },
  { text: '格式', key: 'R' },
  { text: '工具', key: 'T' },
  { text: '装配', key: 'A' },
  { text: '信息', key: 'I' },
  { text: '分析', key: 'L' },
  { text: '首选项', key: 'P' },
  { text: '窗口', key: 'O' },
  { text: '帮助', key: 'H' },
  { text: '应用', key: 'N' }
]

// '|' is a separator, 'v' a drop-down arrow
const bars = [
  ['start', 'new', 'open', 'save', '|', 'cut', 'copy', 'paste', 'del', '|', 'undo', '|', 'info'],
  ['fit', 'fitgray', 'zoomwin', 'zoom', 'rotate', 'pan', 'csys', 'shaded', '|', 'wire', 'v', 'section', 'v'],
  ['layer', 'layers', '|', 'wcs', 'wcs2', 'wcssave', 'key', 'blocks', 'blocks'],
  ['measure', 'angle']
]

const features = [
  {
    more: true,
    items: [
      { icon: 'sketch', text: '草图' },
      '|',
      { icon: 'extrude', text: '拉伸' },
      { icon: 'revolve', text: '回转' },
      { icon: 'swept', text: '已扫掠', key: 'S', line: true },
      { icon: 'styled', text: '样式扫掠', key: 'Y' }
    ]
  },
  {
    items: [
      { icon: 'unite', text: '求和', key: 'U', line: true, drop: true },
      { icon: 'datum', text: '基准平面', key: 'D', line: true, drop: true },
      { icon: 'draft', text: '拔模角' },
      { icon: 'bodydraft', text: '体拔模' },
      { icon: 'instance', text: '实例特征' },
      { icon: 'split', text: '分割体' },
      { icon: 'hole', text: '孔' },
      '|',
      { icon: 'trim', text: '修剪体' }
    ]
  },
  {
    more: true,
    grow: true,
    items: [{ icon: 'line', text: '直线' }, '|', { icon: 'law', text: '规律曲线' }]
  }
]

const snaps = ['snapEnd', 'snapMid', 'snapCurve', 'snapInt', 'snapCen', 'snapQuad', 'snapPt']

const resources = [
  { icon: 'assy', current: true },
  { icon: 'nav' },
  { icon: 'web', gap: true },
  { icon: 'cap' },
  { icon: 'help' },
  { icon: 'clock', gap: true },
  { icon: 'role' },
  { icon: 'vis' },
  { icon: 'users' }
]

const curves = [
  { icon: 'chain', text: '关联', pressed: true },
  '|',
  { icon: 'linePP', text: '直线 点-点' },
  { icon: 'lineXYZ', text: '直线 点-XYZ' },
  { icon: 'linePar', text: '直线 点-平行' },
  { icon: 'linePerp', text: '直线 点-垂直' },
  { icon: 'lineTan', text: '直线 点-相切' },
  { icon: 'lineTT', text: '直线 相切-相\n切' },
  { icon: 'unbounded', text: '无界直线' },
  '|',
  { icon: 'arc3', text: '圆弧 点-点-\n点' },
  { icon: 'arcTan', text: '圆弧 点-点-\n相切' },
  { icon: 'arcTT', text: '圆弧 相切-相\n切-半径' },
  '|',
  { icon: 'circ3', text: '圆 点-点-点' },
  { icon: 'circPPT', text: '圆 点-点-相\n切' },
  { icon: 'circTTT', text: '圆 相切-相切\n-相切' },
  { icon: 'circTTR', text: '圆 相切-相切\n-半径' },
  '|',
  { icon: 'circCP', text: '圆 中心-点' }
]

const ops = [
  { icon: 'boolNew', text: '创建' },
  { icon: 'boolAdd', text: '求和' },
  { icon: 'boolSub', text: '求差', hot: true },
  { icon: 'boolInt', text: '求交' }
]

const limits = [
  { id: 'start', text: '起始', value: '0' },
  { id: 'end', text: '结束', value: '15' }
]

// Wireframe outlines, closed point loops
const blueCurves = [
  [[515, 32], [600, 42], [690, 80], [760, 138], [803, 205], [832, 300], [850, 410], [862, 540], [858, 620], [835, 730], [780, 840], [700, 940], [600, 1015], [520, 1043], [450, 1050], [370, 1035], [300, 1005], [200, 945], [130, 885], [80, 820], [50, 745], [35, 660], [37, 580], [52, 490], [83, 390], [135, 280], [210, 185], [300, 105], [400, 52]],
  [[520, 125], [600, 140], [680, 180], [720, 220], [745, 275], [760, 340], [775, 430], [786, 530], [783, 600], [765, 690], [720, 785], [650, 872], [560, 935], [500, 953], [440, 957], [380, 942], [280, 895], [200, 843], [150, 790], [120, 720], [108, 640], [112, 570], [130, 470], [165, 380], [220, 290], [290, 215], [360, 165], [440, 133]]
]
const grayCurves = [
  [[435, 108], [360, 118], [290, 145], [190, 215], [130, 290], [75, 390], [45, 480], [28, 580], [28, 660], [45, 740], [85, 795], [115, 822], [190, 875], [270, 918], [350, 938], [410, 938], [460, 925], [560, 860], [630, 780], [680, 670], [702, 560], [700, 480], [690, 380], [672, 280], [650, 220], [610, 170], [560, 135], [500, 115]],
  [[575, 145], [500, 153], [420, 185], [340, 245], [270, 330], [220, 440], [195, 540], [192, 640], [205, 730], [240, 805], [275, 853], [330, 895], [400, 940], [470, 965], [540, 974], [610, 965], [700, 920], [770, 855], [820, 780], [850, 690], [868, 600], [862, 500], [850, 400], [832, 305], [800, 240], [760, 195], [720, 165], [640, 148]]
]
const holes = [
  [[415, 382], [350, 400], [290, 460], [257, 550], [260, 620], [295, 700], [350, 745], [400, 752], [460, 735], [520, 680], [550, 600], [548, 500], [520, 445], [470, 395]],
  [[570, 412], [510, 445], [450, 510], [422, 590], [428, 660], [460, 730], [510, 770], [570, 784], [640, 760], [690, 700], [718, 620], [715, 550], [700, 495], [660, 440], [620, 418]]
]
const cyan = [[490, 410], [435, 425], [385, 475], [350, 540], [343, 610], [355, 680], [400, 745], [450, 767], [490, 770], [550, 750], [600, 700], [635, 630], [645, 570], [635, 500], [600, 440], [550, 413]]

// Catmull-Rom through the points, written as cubic segments
const smooth = (pts) => {
  const n = pts.length
  let d = `M${pts[0][0]} ${pts[0][1]}`
  for (let i = 0; i < n; i++) {
    const a = pts[(i + n - 1) % n]
    const b = pts[i]
    const c = pts[(i + 1) % n]
    const e = pts[(i + 2) % n]
    d += `C${b[0] + (c[0] - a[0]) / 6} ${b[1] + (c[1] - a[1]) / 6} ${c[0] - (e[0] - b[0]) / 6} ${c[1] - (e[1] - b[1]) / 6} ${c[0]} ${c[1]}`
  }
  return d + 'Z'
}
</script>

<style>
body {
  margin: 0;
  overflow: hidden;
}
</style>

<style scoped>
.app {
  position: relative;
  display: flex;
  flex-direction: column;
  height: 100vh;
  box-sizing: border-box;
  padding-top: 42px;
  overflow: hidden;
  background: #fff;
  color: #000;
  font-family: "Noto Sans", "Noto Sans CJK SC", sans-serif;
  font-size: 12px;
  line-height: 16px;
}

.app * {
  box-sizing: border-box;
}

button,
select,
input {
  margin: 0;
  padding: 0;
  border: 0;
  background: none;
  color: inherit;
  font: inherit;
}

.sprite {
  position: absolute;
  width: 0;
  height: 0;
}

.icon {
  flex: none;
  display: block;
  width: 16px;
  height: 16px;
}

.tri {
  flex: none;
  display: block;
  width: 0;
  border: 4px solid transparent;
  border-top-color: #202020;
  border-bottom: 0;
}

.tri.small {
  border-width: 3px;
  border-bottom: 0;
}

.grip {
  flex: none;
  align-self: stretch;
  width: 3px;
  margin: 4px 0;
  background: repeating-linear-gradient(#a8acbe 0 2px, #f8f9ff 2px 3px, transparent 3px 4px);
}

.sep {
  flex: none;
  align-self: stretch;
  width: 6px;
  margin: 2px 0;
  background: linear-gradient(90deg, transparent 2px, #787c8a 2px 3px, #eef0fa 3px 4px, transparent 4px);
}

.chev {
  font-size: 14px;
  line-height: 12px;
}

/* title */
.titlebar {
  flex: none;
  display: flex;
  align-items: center;
  height: 22px;
  padding-right: 2px;
  border-bottom: 1px solid #5c6068;
  background: linear-gradient(90deg, #e2e8ee, #d2dbe4 15%, #ccd7e0 32%, #d0dbe5 60%, #c8d3dd 71%, #d2dce6 78%, #cad5df 86%, #d3dde6);
}

.title {
  flex: 1;
  margin: 0 0 0 5px;
  font-family: "Open Sans", "Noto Sans CJK SC", sans-serif;
  font-size: 13px;
  font-weight: 400;
}

.win-buttons {
  display: flex;
  align-self: flex-start;
  height: 18px;
  border: 1px solid #8c98a4;
  border-top: 0;
  border-radius: 0 0 5px 5px;
}

.win-btn {
  display: flex;
  align-items: center;
  justify-content: center;
  width: 28px;
}

.win-btn + .win-btn {
  border-left: 1px solid #98a4b0;
}

.win-btn.wide {
  width: 46px;
}

.win-btn svg {
  width: 14px;
  height: 12px;
}

/* menus */
.menubar {
  flex: none;
  display: flex;
  align-items: center;
  height: 29px;
  padding: 0 5px 0 4px;
  border-bottom: 1px solid #b0b0b4;
  background: linear-gradient(#fff, #e8ebf6 8px, #d3d9ed 9px);
}

.menubar .icon {
  margin-left: 1px;
}

.menus {
  flex: 1;
  display: flex;
  gap: 14px;
  margin-left: 6px;
}

.menu {
  white-space: nowrap;
}

.mdi {
  display: flex;
  gap: 1px;
}

.mdi button {
  display: flex;
  align-items: center;
  justify-content: center;
  width: 16px;
  height: 14px;
  border: 1px solid #8ea4be;
  background: #e2ecf8;
}

.mdi svg {
  width: 9px;
  height: 9px;
}

/* small icon toolbars */
.toolrow {
  flex: none;
  display: flex;
  gap: 2px;
  height: 34px;
  padding: 1px 0 1px 4px;
  border-bottom: 1px solid #fff;
  background: #d3d9ed;
}

.bar {
  display: flex;
  align-items: center;
  height: 32px;
  padding-left: 2px;
  border: 1px solid #b2b4be;
  border-width: 0 1px 1px 0;
  box-shadow: inset 1px 1px #f4f6fc;
}

.start {
  display: flex;
  align-items: center;
  gap: 3px;
  width: 57px;
  margin-left: 4px;
  white-space: nowrap;
}

.tool {
  display: flex;
  align-items: center;
  justify-content: center;
  width: 23px;
  height: 23px;
}

.tool.active {
  border: 1px solid #606878;
  border-radius: 2px;
  background: #ffcc92;
}

.drop {
  display: flex;
  justify-content: center;
  width: 12px;
}

.mini {
  align-self: flex-end;
  display: flex;
  justify-content: center;
  width: 13px;
  padding-bottom: 6px;
}

.combo {
  position: relative;
  display: block;
}

.combo select {
  width: 100%;
  height: 100%;
  padding-left: 4px;
  appearance: none;
  border: 1px solid #8a8e96;
  border-radius: 0;
  background: #fff;
}

.combo-arrow {
  position: absolute;
  top: 1px;
  right: 1px;
  bottom: 1px;
  display: flex;
  align-items: center;
  justify-content: center;
  width: 16px;
  border: 1px solid #70747c;
  background: linear-gradient(#f6f6f6, #d8d8d8);
  pointer-events: none;
}

.combo.layer {
  width: 48px;
  height: 22px;
  margin: 0 4px;
  font-size: 13px;
}

/* labelled feature toolbars */
.featurerow {
  flex: none;
  display: flex;
  height: 64px;
  border-bottom: 1px solid #8e8e92;
  background: linear-gradient(#d3d9ed 50px, #e2e7f6);
}

.fbar {
  display: flex;
  padding-left: 3px;
  border-right: 1px solid #a8aab4;
  box-shadow: inset 1px 0 #f6f8ff;
}

.fbar.grow {
  flex: 1;
  margin-left: 1px;
}

.feature {
  display: flex;
  flex-direction: column;
  align-items: center;
  justify-content: flex-start;
  gap: 5px;
  width: 80px;
  padding-top: 4px;
  white-space: nowrap;
}

.fdrop {
  width: 11px;
  padding: 0 1px;
}

.fend {
  display: flex;
  flex-direction: column;
  align-items: center;
  justify-content: flex-end;
  width: 15px;
  margin-left: auto;
  padding: 0 0 6px;
}

.fbar:first-child .fend {
  width: 22px;
  margin-left: 35px;
}

.fend .chev {
  margin-bottom: auto;
}

/* cue line */
.status {
  flex: none;
  display: flex;
  height: 23px;
  padding: 2px 0 2px 3px;
  border-bottom: 2px solid #70747a;
  background: #f0ecec;
}

.cue {
  width: 652px;
  border-right: 1px solid #d0cccc;
  font-weight: 500;
}

.cell {
  flex: 1;
  border-right: 1px solid #d0cccc;
}

.cell.narrow {
  flex: none;
  width: 20px;
}

.cell.last {
  flex: none;
  width: 37px;
}

/* work area */
.workspace {
  flex: 1;
  min-height: 0;
  display: flex;
}

.rail {
  display: flex;
  flex-direction: column;
  gap: 49px;
  width: 28px;
  padding: 2px 1px 0;
  border-right: 2px solid #70747a;
  background: linear-gradient(90deg, #eef1fb, #ccd3ea);
}

.railbar {
  display: flex;
  flex-direction: column;
  align-items: center;
  padding-bottom: 4px;
  border-bottom: 1px solid #a8aab4;
}

.hgrip {
  width: 20px;
  height: 3px;
  background: repeating-linear-gradient(90deg, #a8acbe 0 2px, #f8f9ff 2px 3px, transparent 3px 4px);
}

.railbtn {
  display: flex;
  align-items: center;
  justify-content: center;
  height: 23px;
}

.railbtn.first {
  height: 25px;
}

.left {
  width: 0;
  border: 3px solid transparent;
  border-right-color: #000;
  border-left: 0;
}

.left.side {
  align-self: flex-start;
  margin: 3px 0 0 5px;
}

.railbar hr {
  width: 18px;
  margin: 4px 0;
  border: 0;
  border-top: 1px solid #70747e;
}

.stage {
  flex: 1;
  position: relative;
  overflow: hidden;
  background: linear-gradient(#97bedd, #e5e5e5 80%);
}

.model {
  position: absolute;
  left: 392px;
  top: 106px;
  width: 300px;
  height: 360px;
}

.model svg {
  display: block;
  width: 100%;
  height: 100%;
}

.tag {
  position: absolute;
  padding: 3px 1px 3px 2px;
  border: 1px solid #fff;
  border-right-color: #a0a0a0;
  border-bottom-color: #a0a0a0;
  background: #f0f0f0;
  white-space: nowrap;
}

.tag.end {
  left: 169px;
  top: 103px;
}

.tag.begin {
  left: 144px;
  top: 123px;
}

.tag.profile {
  left: 164px;
  top: 163px;
}

.resource {
  display: flex;
  flex-direction: column;
  width: 36px;
  padding: 13px 6px 0 0;
  border-left: 7px solid #f0f0f0;
  background: #9f9f9f;
}

.rtab {
  flex: none;
  display: flex;
  align-items: center;
  justify-content: center;
  height: 33px;
  margin: 0 0 1px 1px;
  border-bottom: 1px solid #a8b0c8;
  background: linear-gradient(#f4f6fc, #d3d9ed 35%, #d3d9ed 75%, #e6eaf7);
}

.rtab.current {
  height: 37px;
  margin: 0 -1px 0 0;
  border-bottom-color: #707070;
  background: #f0f0f0;
}

.rtab.gap {
  margin-top: 12px;
}

/* curve toolbar */
.curvebar {
  flex: none;
  position: relative;
  display: flex;
  height: 53px;
  padding: 3px 3px 0 4px;
  overflow: hidden;
  background: linear-gradient(#fff, #e8ebf5 9px, #d3d9ed 10px);
}

.curve {
  flex: none;
  display: flex;
  flex-direction: column;
  align-items: center;
  justify-content: flex-start;
  gap: 4px;
  width: 80px;
  height: 60px;
  padding-top: 3px;
  line-height: 17px;
  white-space: pre;
}

.curve.pressed {
  border: 1px solid #606878;
  border-radius: 3px;
  background: #ffcf97;
}

.curvebar .chev {
  margin-left: auto;
}

.watermark {
  position: absolute;
  right: 19px;
  top: 30px;
  display: flex;
  align-items: center;
  color: #fff;
  font-family: "DejaVu Sans", "Noto Sans CJK SC", sans-serif;
  font-size: 17px;
  line-height: 20px;
  paint-order: stroke fill;
  -webkit-text-stroke: 2px #f03840;
}

.watermark b {
  font-size: 18px;
}

/* extrude dialog */
.dialog {
  position: absolute;
  left: 30px;
  top: 200px;
  width: 324px;
  padding: 0 7px 7px;
  border: 1px solid #484c52;
  border-radius: 7px 7px 0 0;
  background: linear-gradient(#bccbd8, #cfdeea 28px, #d7e4f1 60px);
}

.dialog-head {
  display: flex;
  align-items: center;
  height: 29px;
  padding: 6px 2px 0 1px;
}

.dialog-head h2 {
  flex: 1;
  margin: 0 0 0 5px;
  color: #4c5258;
  font-size: 12px;
  font-weight: 400;
}

.dialog-close {
  display: flex;
  align-items: center;
  justify-content: center;
  width: 31px;
  height: 17px;
  border: 1px solid #8494a8;
  border-radius: 2px;
  background: #c5d3e0;
}

.dialog-close svg {
  width: 12px;
  height: 10px;
}

.dialog-body {
  height: 286px;
  padding: 6px 4px 0;
  background: #f0f0f0;
}

.group {
  margin: 0;
  padding: 0 4px;
  border: 1px solid #d6e0e8;
  border-radius: 3px;
  box-shadow: inset 0 0 0 1px #fafcfd;
}

.group legend {
  height: 14px;
  margin-left: 2px;
  padding: 0 3px;
  line-height: 14px;
}

.steps {
  display: flex;
  align-items: flex-end;
  padding-left: 64px;
}

.steps-group {
  display: flex;
  align-items: flex-start;
  gap: 4px;
  width: 170px;
  padding: 3px 3px 4px 4px;
}

.btn {
  flex: none;
  display: flex;
  align-items: center;
  justify-content: center;
  border: 1px solid #707070;
  border-radius: 3px;
  background: linear-gradient(#f4f4f4, #ebebeb 49%, #dcdcdc 51%, #cfcfcf);
  box-shadow: inset 0 0 0 1px #fbfbfb;
}

.btn.big {
  width: 30px;
  height: 30px;
}

.btn.big svg,
.split svg {
  width: 26px;
  height: 26px;
}

.btn.focus {
  border-color: #3c7fb1;
  box-shadow: inset 0 0 0 1px #4cd0f4;
}

.btn.flip {
  margin: 0 0 4px 4px;
}

.split {
  display: flex;
  align-items: center;
  gap: 3px;
  width: 43px;
  height: 31px;
  border: 1px solid #9c9c9c;
}

.split .op,
.op {
  width: 22px;
  height: 20px;
}

.split .op {
  margin: 0 2px;
}

.bool {
  position: relative;
  margin-left: 4px;
}

.bool-menu {
  position: absolute;
  z-index: 2;
  left: 0;
  top: 32px;
  display: flex;
  flex-direction: column;
  gap: 6px;
  width: 32px;
  padding: 2px 1px 1px;
  border: 1px solid #fafafa;
  border-right-color: #a0a0a0;
  border-bottom-color: #a0a0a0;
  background: #f0f0f0;
}

.bool-menu button {
  display: flex;
  align-items: center;
  justify-content: center;
  width: 28px;
  height: 26px;
  border: 1px solid transparent;
  border-radius: 3px;
}

.bool-menu .hot {
  border-color: #a8a8a8;
  background: #f4f4f4;
}

.tip {
  position: absolute;
  left: 11px;
  top: 96px;
  padding: 1px 2px;
  border: 1px solid #606060;
  background: #ffffe1;
  white-space: nowrap;
}

.limits {
  display: flex;
  flex-direction: column;
  gap: 3px;
  margin-top: 4px;
  padding: 5px 4px 2px;
}

.limit {
  display: flex;
  align-items: center;
  height: 24px;
}

.limit label {
  width: 29px;
}

.combo.wide {
  width: 99px;
  height: 24px;
}

.btn.point {
  width: 23px;
  height: 23px;
  margin: 0 3px;
}

.limit input {
  width: 83px;
  height: 23px;
  padding-left: 3px;
  border: 1px solid #acacac;
  color: #8a8a8a;
  font-family: "DejaVu Sans", sans-serif;
  font-size: 14px;
}

.unit {
  width: 31px;
  padding: 3px 0 0 2px;
  color: #909090;
  font-family: "Liberation Serif", serif;
}

.btn.arrow {
  width: 18px;
  height: 22px;
  border-color: #b4b4b4;
  background: #f2f2f2;
}

.btn.arrow svg {
  width: 12px;
  height: 12px;
}

.check {
  display: flex;
  align-items: center;
  gap: 5px;
  height: 30px;
  margin-top: 3px;
}

.check.off {
  color: #9c9c9c;
}

input[type='checkbox'] {
  position: relative;
  flex: none;
  width: 13px;
  height: 13px;
  appearance: none;
  border: 1px solid #8e8f8f;
  background: linear-gradient(135deg, #cfd3d8, #f8f8f8);
  box-shadow: inset 0 0 0 2px #f6f6f6;
}

input[type='checkbox']:disabled {
  border-color: #b8b8b8;
  background: #f8f8f8;
}

input[type='checkbox']:checked::after {
  content: '';
  position: absolute;
  left: 4px;
  top: 1px;
  width: 4px;
  height: 8px;
  border: solid #283c80;
  border-width: 0 2px 2px 0;
  transform: rotate(40deg);
}

.preview {
  display: flex;
  align-items: flex-start;
  gap: 5px;
  margin-top: 6px;
}

.preview input {
  margin-top: 1px;
}

.more {
  margin: 0 3px 0 auto;
}

.rule {
  height: 2px;
  margin: 10px -3px 4px;
  border: 0;
  border-top: 1px solid #a0a0a0;
  background: #fff;
}

.actions {
  display: flex;
  justify-content: flex-end;
  gap: 7px;
  padding-right: 7px;
}

.btn.text {
  width: 52px;
  height: 25px;
}
</style>
